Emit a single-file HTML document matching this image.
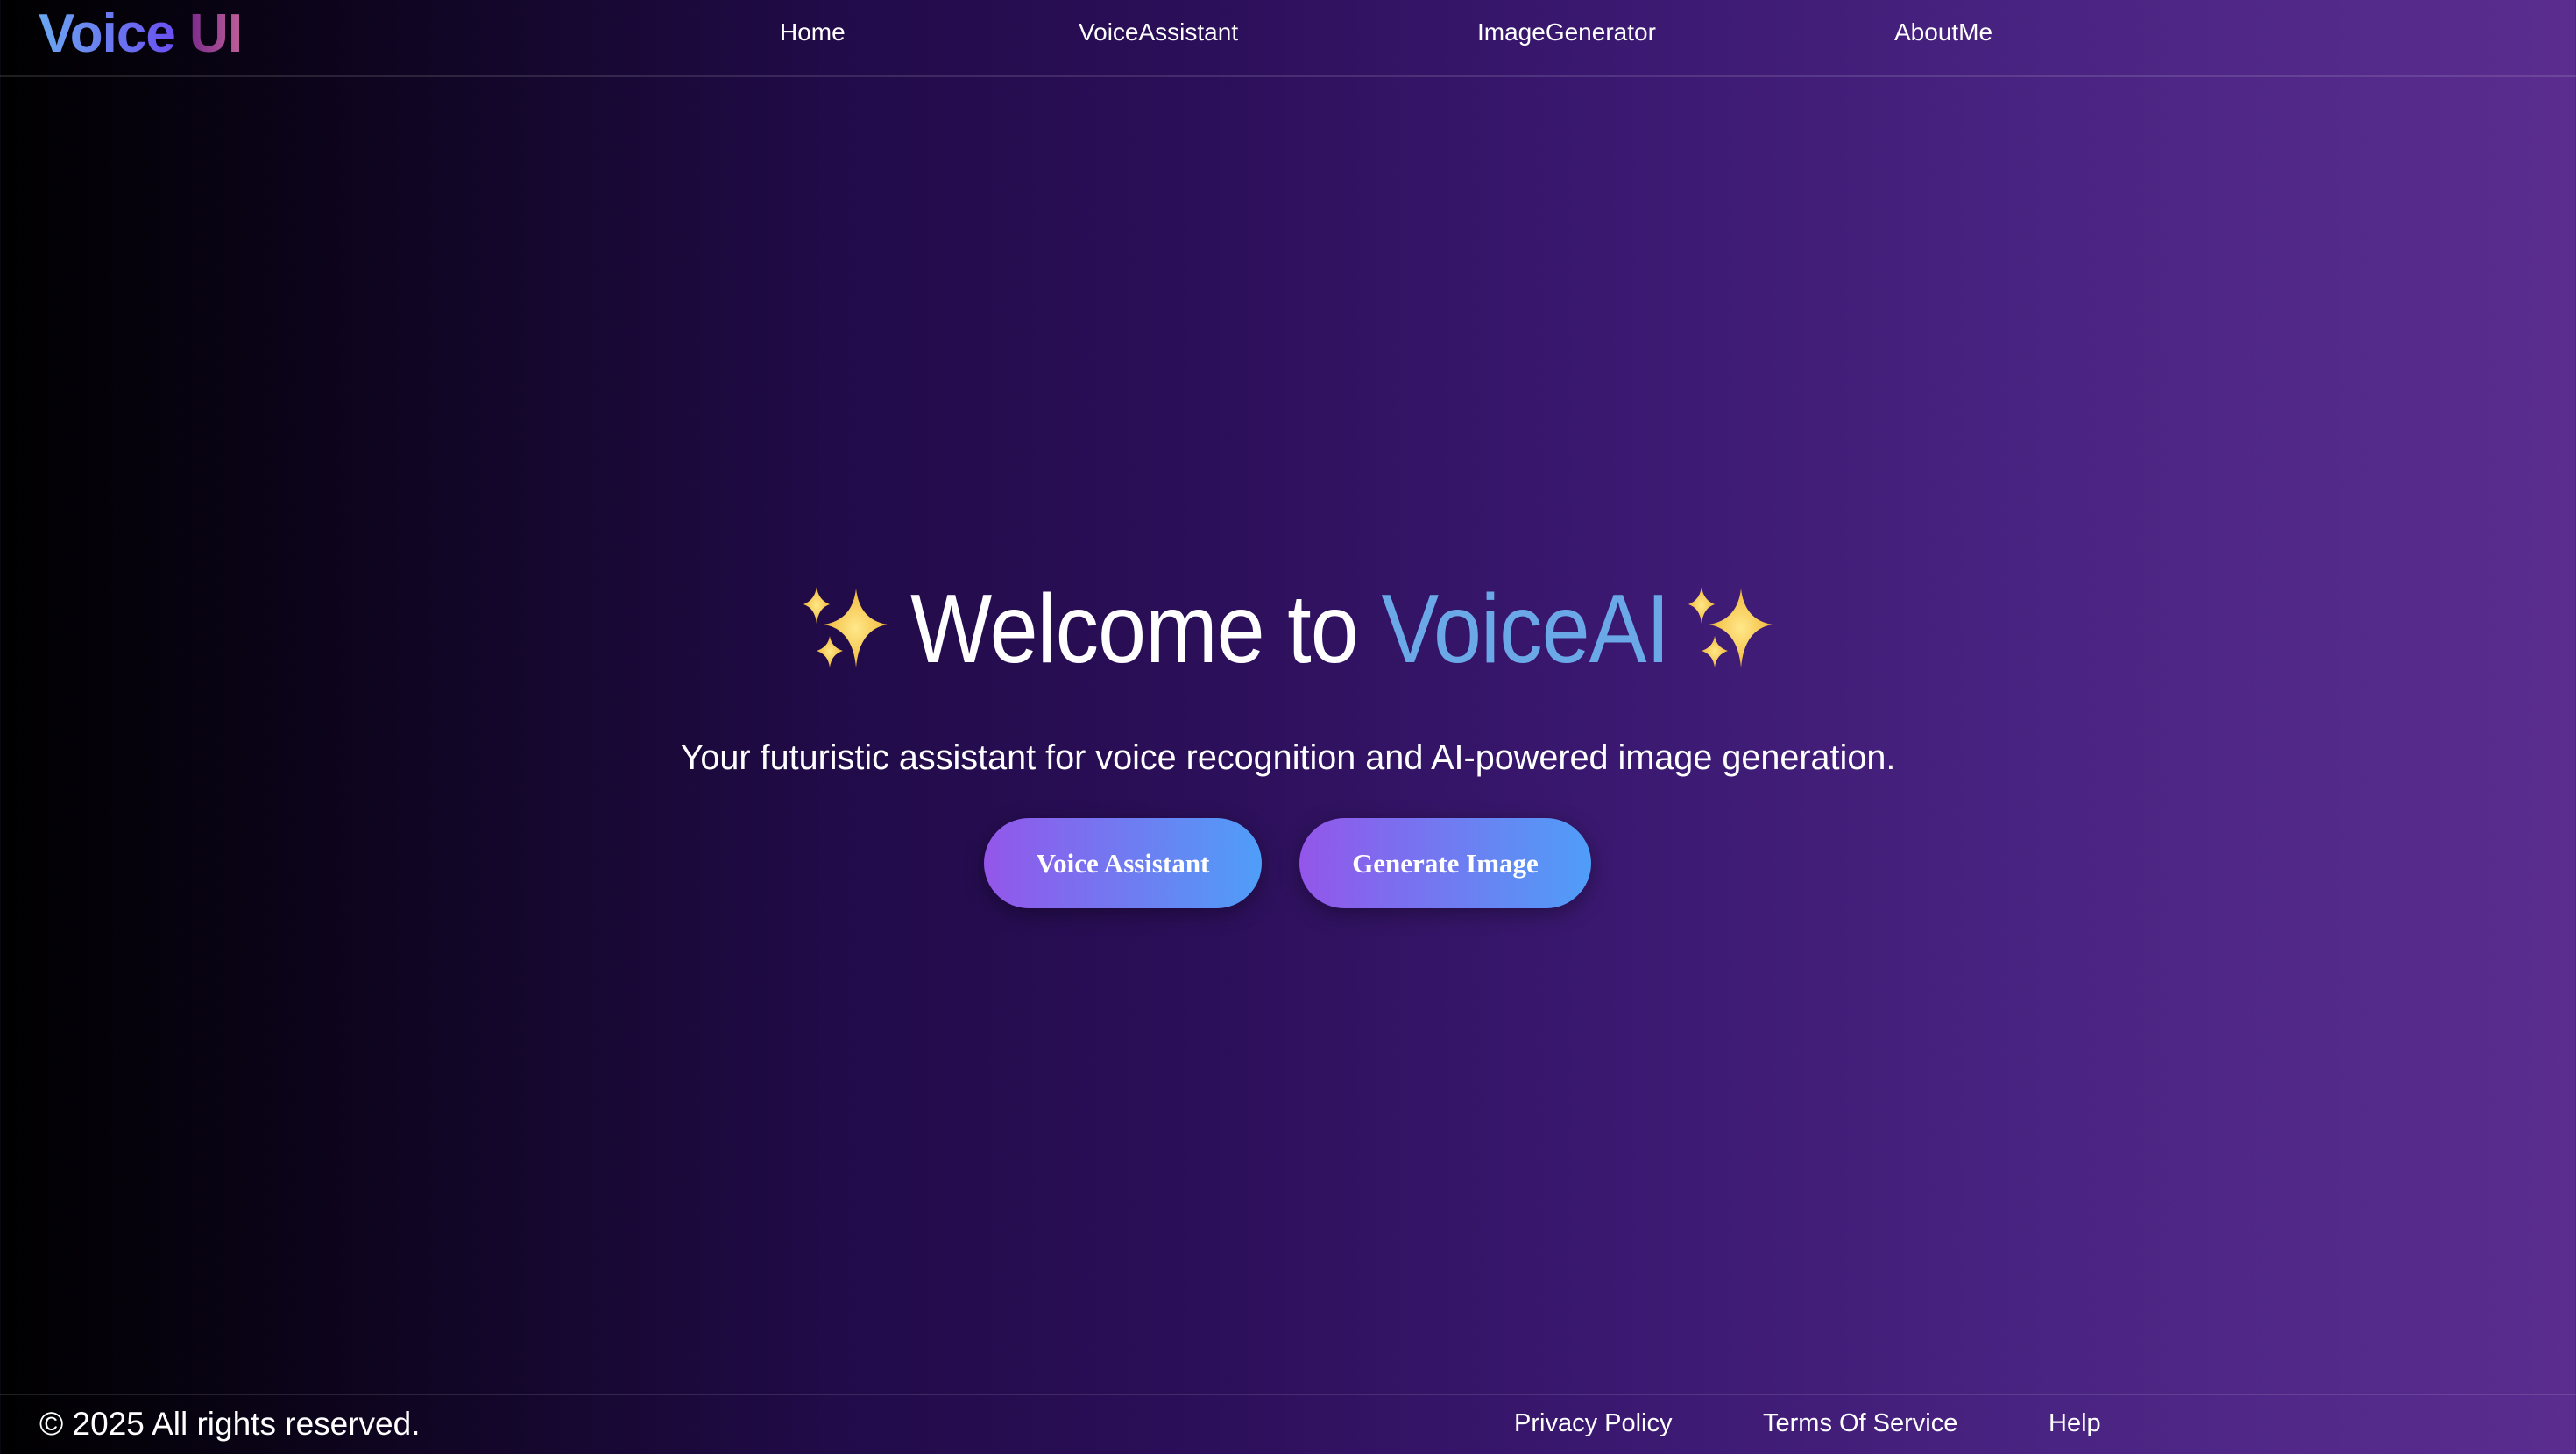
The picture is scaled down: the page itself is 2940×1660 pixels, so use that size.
<!DOCTYPE html>
<html><head><meta charset="utf-8">
<style>
html,body{margin:0;padding:0}
body{width:2940px;height:1658px;overflow:hidden;position:relative;
background:linear-gradient(90deg,#000000 0%,#120627 18%,#210b48 32%,#2a0e57 45%,#3a1870 62%,#4a2482 80%,#5a2d8f 100%);
font-family:"Liberation Sans",sans-serif;color:#fff}
.nav{position:absolute;left:0;top:0;width:2940px;height:86px;border-bottom:2px solid rgba(255,255,255,0.12)}
.logo{position:absolute;left:44px;top:3px;font-size:62px;font-weight:bold;letter-spacing:-1px;line-height:72px}
.logo .a{background:linear-gradient(90deg,#6aa8f0,#6a4ff0);-webkit-background-clip:text;background-clip:text;color:transparent}
.logo .b{background:linear-gradient(90deg,#7a2a8a,#c0609a);-webkit-background-clip:text;background-clip:text;color:transparent}
.nl{position:absolute;top:18px;font-size:28px;line-height:38px;color:#fff}
h1{position:absolute;left:1039px;top:656px;margin:0;white-space:nowrap;font-weight:normal;font-size:111px;line-height:124px;letter-spacing:-1px;transform:scaleX(0.89);transform-origin:0 0}
h1 span{color:#6aa8e8}
.sp{position:absolute;top:668px;width:100px;height:96px}
.sub{position:absolute;left:0;width:2940px;text-align:center;top:841px;font-size:39.6px;line-height:48px}
.btn{position:absolute;top:934px;height:103px;border-radius:52px;background:linear-gradient(90deg,#9356ea,#4f9ef8);
font-family:"Liberation Serif",serif;font-weight:bold;font-size:31px;line-height:103px;text-align:center;color:#fff;
box-shadow:0 6px 24px rgba(0,0,0,0.35)}
.foot{position:absolute;left:0;top:1591px;width:2940px;height:67px;border-top:2px solid rgba(255,255,255,0.12)}
.copy{position:absolute;left:45px;top:10px;font-size:37px;line-height:46px}
.fl{position:absolute;top:12px;font-size:29px;line-height:40px}
</style></head><body>
<div class="nav">
 <div class="logo"><span class="a">Voice</span> <span class="b">UI</span></div>
 <div class="nl" style="left:890px">Home</div>
 <div class="nl" style="left:1231px">VoiceAssistant</div>
 <div class="nl" style="left:1686px">ImageGenerator</div>
 <div class="nl" style="left:2162px">AboutMe</div>
</div>

<svg class="sp" style="left:915px" viewBox="0 0 100 96">
 <defs><radialGradient id="g" cx="50%" cy="50%" r="50%"><stop offset="0" stop-color="#ffe88a"/><stop offset="1" stop-color="#f2b93a"/></radialGradient></defs>
 <path fill="url(#g)" d="M62 4 Q66 40 98 45 Q66 50 62 94 Q58 50 25 45 Q58 40 62 4Z"/>
 <path fill="url(#g)" d="M17 2 Q19 17 32 22 Q19 26 17 44 Q15 26 2 22 Q15 17 17 2Z"/>
 <path fill="url(#g)" d="M32 58 Q34 71 47 75 Q34 79 32 94 Q30 79 17 75 Q30 71 32 58Z"/>
</svg>
<svg class="sp" style="left:1925px" viewBox="0 0 100 96">
 <path fill="url(#g)" d="M62 4 Q66 40 98 45 Q66 50 62 94 Q58 50 25 45 Q58 40 62 4Z"/>
 <path fill="url(#g)" d="M17 2 Q19 17 32 22 Q19 26 17 44 Q15 26 2 22 Q15 17 17 2Z"/>
 <path fill="url(#g)" d="M32 58 Q34 71 47 75 Q34 79 32 94 Q30 79 17 75 Q30 71 32 58Z"/>
</svg>
<h1>Welcome to <span>VoiceAI</span></h1>
<div class="sub">Your futuristic assistant for voice recognition and AI-powered image generation.</div>
<div class="btn" style="left:1123px;width:317px">Voice Assistant</div>
<div class="btn" style="left:1483px;width:333px">Generate Image</div>

<div class="foot">
 <div class="copy">© 2025 All rights reserved.</div>
 <div class="fl" style="left:1728px">Privacy Policy</div>
 <div class="fl" style="left:2012px">Terms Of Service</div>
 <div class="fl" style="left:2338px">Help</div>
</div>
</body></html>
